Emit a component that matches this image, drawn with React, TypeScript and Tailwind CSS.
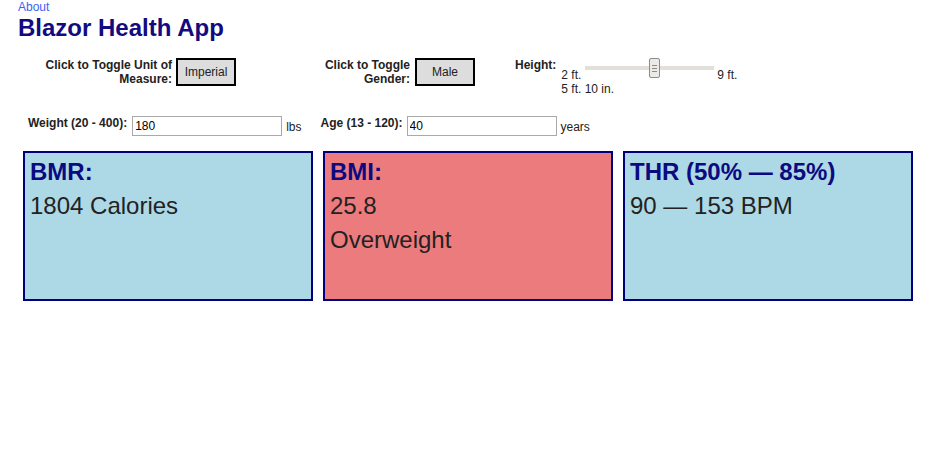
import { useState } from "react";

type Card = {
  title: string;
  lines: string[];
  tone: "blue" | "red";
};

function ResultCard({ title, lines, tone }: Card) {
  return (
    <div
      className={
        tone === "red"
          ? "h-[150px] w-[290px] border-2 border-[#00007f] bg-[#ec7b7e] px-[5px] pt-[2px] text-[24px] leading-[34px]"
          : "h-[150px] w-[290px] border-2 border-[#00007f] bg-[#add8e6] px-[5px] pt-[2px] text-[24px] leading-[34px]"
      }
    >
      <div className="font-bold text-[#0b0a80]">{title}</div>
      {lines.map((l) => (
        <div key={l} className="text-[#222]">
          {l}
        </div>
      ))}
    </div>
  );
}

export default function App() {
  const [imperial, setImperial] = useState(true);
  const [male, setMale] = useState(true);

  const cards: Card[] = [
    { title: "BMR:", lines: ["1804 Calories"], tone: "blue" },
    { title: "BMI:", lines: ["25.8", "Overweight"], tone: "red" },
    { title: "THR (50% \u2014 85%)", lines: ["90 \u2014 153 BPM"], tone: "blue" },
  ];

  return (
    <div className="min-h-screen bg-white font-['Liberation_Sans',Arial,sans-serif] text-[#222]">
      {/* Header */}
      <div className="pl-[18px]">
        <a href="#" className="block text-[12px] leading-[14px] text-[#3a62f5]">
          About
        </a>
        <h1 className="text-[24px] font-bold leading-[28px] text-[#140a80]">Blazor Health App</h1>
      </div>

      {/* Toggles + height slider */}
      <div className="mt-[16px] flex items-start pl-[18px] text-[12px] leading-[14px]">
        <div className="w-[154px] text-right font-bold">
          Click to Toggle Unit of
          <br />
          Measure:
        </div>
        <button
          onClick={() => setImperial(!imperial)}
          className="ml-[4px] h-[28px] w-[60px] border-2 border-black bg-[#dddddd] text-center text-[12px]"
        >
          {imperial ? "Imperial" : "Metric"}
        </button>

        <div className="ml-[4px] w-[170px] text-right font-bold">
          Click to Toggle
          <br />
          Gender:
        </div>
        <button
          onClick={() => setMale(!male)}
          className="ml-[5px] h-[28px] w-[60px] border-2 border-black bg-[#dddddd] text-center text-[12px]"
        >
          {male ? "Male" : "Female"}
        </button>

        <div className="ml-[40px] font-bold">Height:</div>
        <div className="ml-[5px]">
          <div className="flex items-start">
            <span className="mt-[10px]">2 ft.</span>
            <div role="slider" aria-valuenow={70} className="relative ml-[4px] h-[20px] w-[129px]">
              <div className="absolute left-0 right-0 top-[8px] h-[4px] bg-[#e3dfdb]" />
              <div className="absolute left-[64px] top-0 flex h-[20px] w-[11px] flex-col items-center justify-center gap-[2px] rounded-[2px] border border-[#8f8a85] bg-[#eceae7]">
                <div className="h-px w-[5px] bg-[#8f8a85]" />
                <div className="h-px w-[5px] bg-[#8f8a85]" />
                <div className="h-px w-[5px] bg-[#8f8a85]" />
              </div>
            </div>
            <span className="ml-[3px] mt-[10px]">9 ft.</span>
          </div>
          <div>5 ft. 10 in.</div>
        </div>
      </div>

      {/* Weight / age inputs */}
      <div className="mt-[20px] flex h-[20px] items-center pl-[28px] text-[12px] leading-[14px]">
        <label className="self-start font-bold">Weight (20 - 400):</label>
        <input
          readOnly
          value="180"
          className="ml-[5px] h-[20px] w-[150px] border border-[#a9a9a9] px-[2px] text-[12px] text-black outline-none"
        />
        <span className="ml-[4px] mt-[2px]">lbs</span>

        <label className="ml-[19px] self-start font-bold">Age (13 - 120):</label>
        <input
          readOnly
          value="40"
          className="ml-[4px] h-[20px] w-[150px] border border-[#a9a9a9] px-[2px] text-[12px] text-black outline-none"
        />
        <span className="ml-[4px] mt-[2px]">years</span>
      </div>

      {/* Results */}
      <div className="mt-[15px] flex gap-[10px] pl-[23px]">
        {cards.map((c) => (
          <ResultCard key={c.title} {...c} />
        ))}
      </div>
    </div>
  );
}
